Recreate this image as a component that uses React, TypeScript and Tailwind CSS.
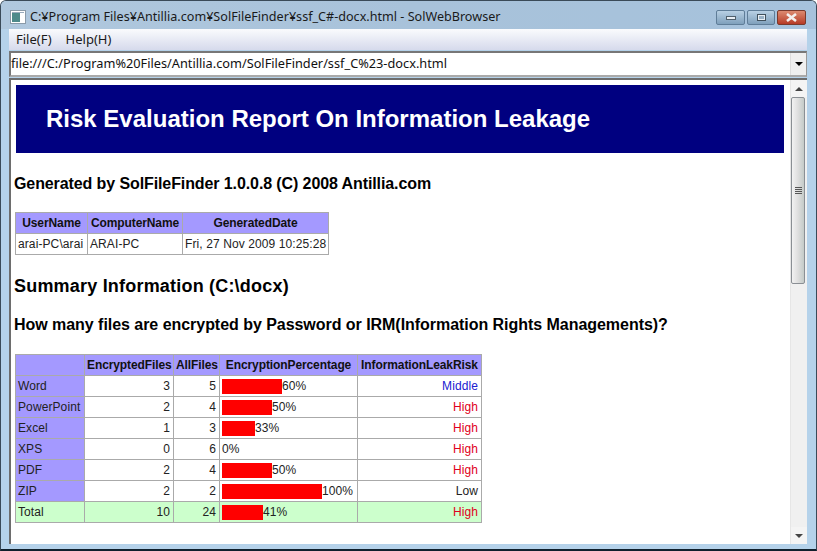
import React from "react";

const summary = [
  { name: "Word", enc: 3, all: 5, pct: 60, risk: "Middle", color: "text-[#2020d0]" },
  { name: "PowerPoint", enc: 2, all: 4, pct: 50, risk: "High", color: "text-[#e00020]" },
  { name: "Excel", enc: 1, all: 3, pct: 33, risk: "High", color: "text-[#e00020]" },
  { name: "XPS", enc: 0, all: 6, pct: 0, risk: "High", color: "text-[#e00020]" },
  { name: "PDF", enc: 2, all: 4, pct: 50, risk: "High", color: "text-[#e00020]" },
  { name: "ZIP", enc: 2, all: 2, pct: 100, risk: "Low", color: "text-[#111]" },
];

const th = "border border-[#aaa] bg-[#a499ff] pl-[2px] pr-[2px] font-bold text-[#111] h-[21px] leading-[14px] tracking-[-0.1px] whitespace-nowrap";
const td = "border border-[#aaa] pl-[2px] pr-[3px] h-[21px] leading-[14px] text-[#222] tracking-[0.1px] whitespace-nowrap";

function PercentCell({ pct }: { pct: number }) {
  return (
    <div className="flex items-center h-[15px]">
      {pct > 0 && <div className="h-[15px] bg-[#ff0000]" style={{ width: pct }} />}
      <span>{pct}%</span>
    </div>
  );
}

function Scrollbar() {
  return (
    <div className="w-[17px] shrink-0 flex flex-col bg-[#f0f0f0] border-l border-[#e6e6e6]">
      <div className="h-[17px] flex items-center justify-center bg-[#f4f4f4]">
        <div className="w-0 h-0 border-x-[4px] border-x-transparent border-b-[4px] border-b-[#444]" />
      </div>
      <div className="h-[187px] mr-[2px] border border-[#8a8f94] rounded-[2px] bg-gradient-to-r from-[#f2f2f2] via-[#dedede] to-[#c4cbc8] flex items-center justify-center">
        <div className="flex flex-col gap-[1px]">
          <div className="w-[7px] h-[1px] bg-[#555]" />
          <div className="w-[7px] h-[1px] bg-[#555]" />
          <div className="w-[7px] h-[1px] bg-[#555]" />
          <div className="w-[7px] h-[1px] bg-[#555]" />
        </div>
      </div>
      <div className="flex-1" />
      <div className="h-[17px] flex items-center justify-center bg-[#f4f4f4]">
        <div className="w-0 h-0 border-x-[4px] border-x-transparent border-t-[4px] border-t-[#444]" />
      </div>
    </div>
  );
}

export default function App() {
  return (
    <div className="w-[817px] h-[551px] overflow-hidden flex flex-col bg-[#b5d2ea] border border-[#3a4a58] rounded-t-[6px] border-b-2 border-b-[#10202c] font-['Liberation_Sans',sans-serif]">
      {/* title bar */}
      <div className="h-[28px] shrink-0 flex items-center bg-gradient-to-r from-[#b0c8de] via-[#a8c2da] to-[#a6c2dc] pt-[4px] pl-[9px] pr-[10px]">
        <svg width="16" height="14" viewBox="0 0 16 14" className="shrink-0">
          <rect x="0.5" y="0.5" width="15" height="13" fill="#fff" stroke="#8a9aa8" />
          <rect x="2" y="3" width="8" height="9" fill="#4e8a8a" />
          <rect x="2" y="2" width="12" height="1" fill="#9ab" />
        </svg>
        <span className="ml-[4px] text-[12.6px] text-[#1a1a1a] font-['Noto_Sans',sans-serif] whitespace-nowrap">
          C:¥Program Files¥Antillia.com¥SolFileFinder¥ssf_C#-docx.html - SolWebBrowser
        </span>
        <div className="ml-auto flex gap-[2px]">
          <div className="w-[29px] h-[15px] rounded-[2px] border border-[#5f7d98] bg-gradient-to-b from-[#b8d0e4] to-[#7fa0bc] flex items-center justify-center">
            <div className="w-[10px] h-[4px] mt-[2px] bg-[#e8eef4] border border-[#50606c]" />
          </div>
          <div className="w-[28px] h-[15px] rounded-[2px] border border-[#5f7d98] bg-gradient-to-b from-[#b8d0e4] to-[#7fa0bc] flex items-center justify-center">
            <div className="w-[9px] h-[7px] bg-[#e8eef4] border border-[#40505c] flex items-center justify-center">
              <div className="w-[5px] h-[3px] bg-[#9ab2c6]" />
            </div>
          </div>
          <div className="w-[29px] h-[15px] rounded-[2px] border border-[#7a3a2c] bg-gradient-to-b from-[#dc8a70] to-[#b63a26] flex items-center justify-center">
            <svg width="13" height="9" viewBox="0 0 13 9">
              <path d="M2 1 L11 8 M11 1 L2 8" stroke="#f4f0ee" strokeWidth="2.6" />
            </svg>
          </div>
        </div>
      </div>

      <div className="flex-1 min-h-0 flex flex-col ml-[7px] mr-[8px] mb-[5px]">
        {/* menu bar */}
        <div className="h-[21px] shrink-0 mx-[1px] flex items-center gap-[14px] pl-[7px] bg-gradient-to-b from-[#fafbfd] to-[#d6daec] text-[13px] text-[#1a1a1a] font-['Noto_Sans',sans-serif]">
          <span>File(F)</span>
          <span>Help(H)</span>
        </div>

        {/* address bar */}
        <div className="h-[26px] shrink-0 mt-[1px] mx-[1px] flex bg-white border-t-2 border-l-2 border-t-[#777] border-l-[#777] border-b-2 border-b-[#aaa] border-r border-r-[#999]">
          <div className="flex-1 flex items-center text-[12.75px] text-[#111] font-['Noto_Sans',sans-serif] whitespace-nowrap">
            file:///C:/Program%20Files/Antillia.com/SolFileFinder/ssf_C%23-docx.html
          </div>
          <div className="w-[16px] shrink-0 flex items-center justify-center bg-[#efefef] border-l border-[#ddd]">
            <div className="w-0 h-0 border-x-[4px] border-x-transparent border-t-[4px] border-t-black" />
          </div>
        </div>

        {/* page area */}
        <div className="flex-1 min-h-0 mt-[1px] mx-[1px] flex bg-white border-t-2 border-l-2 border-[#6d6d6d]">
          <div className="flex-1 min-w-0 overflow-hidden pl-[3px] pr-[6px] pt-[5px] text-black">
            <div className="h-[68px] ml-[2px] bg-[#000080] flex items-center pl-[30px] text-[24px] font-bold text-white">
              Risk Evaluation Report On Information Leakage
            </div>
            <div className="mt-[21px] text-[16px] leading-[19px] font-bold tracking-[-0.1px]">
              Generated by SolFileFinder 1.0.0.8 (C) 2008 Antillia.com
            </div>

            <table className="mt-[19px] ml-[1px] w-[313px] table-fixed border-collapse text-[12px]">
              <thead>
                <tr>
                  <th className={`${th} w-[72px]`}>UserName</th>
                  <th className={`${th} w-[95px]`}>ComputerName</th>
                  <th className={`${th} w-[146px]`}>GeneratedDate</th>
                </tr>
              </thead>
              <tbody>
                <tr>
                  <td className={td}>arai-PC\arai</td>
                  <td className={td}>ARAI-PC</td>
                  <td className={td}>Fri, 27 Nov 2009 10:25:28</td>
                </tr>
              </tbody>
            </table>

            <div className="mt-[21px] text-[18px] leading-[21px] font-bold tracking-[0.2px]">
              Summary Information (C:\docx)
            </div>
            <div className="mt-[18px] text-[16px] leading-[19px] font-bold tracking-[-0.04px]">
              How many files are encrypted by Password or IRM(Information Rights Managements)?
            </div>

            <table className="mt-[20px] ml-[1px] w-[466px] table-fixed border-collapse text-[12px]">
              <thead>
                <tr>
                  <th className={`${th} w-[69px]`} />
                  <th className={`${th} w-[89px]`}>EncryptedFiles</th>
                  <th className={`${th} w-[46px]`}>AllFiles</th>
                  <th className={`${th} w-[138px]`}>EncryptionPercentage</th>
                  <th className={`${th} w-[124px]`}>InformationLeakRisk</th>
                </tr>
              </thead>
              <tbody>
                {summary.map((row) => (
                  <tr key={row.name}>
                    <td className={`${td} bg-[#a499ff]`}>{row.name}</td>
                    <td className={`${td} text-right`}>{row.enc}</td>
                    <td className={`${td} text-right`}>{row.all}</td>
                    <td className={td}>
                      <PercentCell pct={row.pct} />
                    </td>
                    <td className={`${td} text-right ${row.color}`}>{row.risk}</td>
                  </tr>
                ))}
                <tr className="bg-[#ccffcc]">
                  <td className={td}>Total</td>
                  <td className={`${td} text-right`}>10</td>
                  <td className={`${td} text-right`}>24</td>
                  <td className={td}>
                    <PercentCell pct={41} />
                  </td>
                  <td className={`${td} text-right text-[#e00020]`}>High</td>
                </tr>
              </tbody>
            </table>
          </div>
          <Scrollbar />
        </div>
      </div>
    </div>
  );
}
